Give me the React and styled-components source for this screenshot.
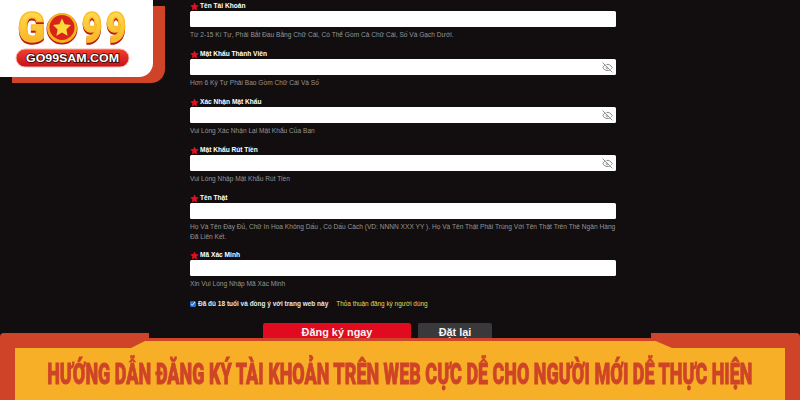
import React from "react"
import styled, { createGlobalStyle } from "styled-components"
import { EyeOff } from "lucide-react"

const GlobalStyle = createGlobalStyle`
  html, body {
    margin: 0;
    padding: 0;
    background: #120e0f;
  }
  * {
    box-sizing: border-box;
  }
`

const Page = styled.div`
  display: flex;
  flex-direction: column;
  width: 800px;
  height: 400px;
  overflow: hidden;
  background: #120e0f;
  font-family: "Liberation Sans", Arial, sans-serif;
`

const Main = styled.div`
  display: flex;
  align-items: flex-start;
  height: 338px;
  overflow: hidden;
`

const LogoPanel = styled.div`
  flex: none;
  width: 153px;
  height: 77px;
  margin-right: 37px;
  background: #fff;
  border-bottom-right-radius: 14px;
  box-shadow: 12px 6px 0 #cf4428;
`

const Form = styled.form`
  display: flex;
  flex-direction: column;
  width: 426px;
  padding-top: 1px;
`

const Field = styled.div`
  display: flex;
  flex-direction: column;
  height: ${props => props.$height || 48}px;
`

const Label = styled.label`
  display: flex;
  align-items: center;
  gap: 1px;
  height: 10px;
  color: #fff;
  font-size: 6.6px;
  font-weight: bold;
  line-height: 10px;
`

const InputWrap = styled.div`
  display: flex;
  align-items: center;
  justify-content: flex-end;
  height: 16px;
  padding-right: 3px;
  background: #fff;
  border-radius: 1.5px;
  color: #858585;
`

const Hint = styled.p`
  margin: 3px 0 0;
  color: #979592;
  font-size: 6.6px;
  line-height: 9.5px;
`

const AgreeRow = styled.div`
  display: flex;
  align-items: center;
  height: 10px;
  margin-top: 1px;
  color: #e6e6e6;
  font-size: 6.5px;
  font-weight: bold;
  line-height: 10px;
`

const Check = styled.input`
  width: 6px;
  height: 6px;
  margin: 0 2px 0 0;
  accent-color: #1b6fd8;
`

const AgreeLink = styled.a`
  margin-left: 8px;
  color: #ecd650;
  font-size: 6.4px;
  font-weight: normal;
`

const Buttons = styled.div`
  display: flex;
  gap: 7px;
  margin: 14px 0 0 73px;
`

const Button = styled.button`
  width: ${props => (props.$primary ? 148 : 74)}px;
  height: 24px;
  padding: 0 0 6px;
  border: 0;
  border-radius: 2px 2px 0 0;
  background: ${props => (props.$primary ? "#e10a1f" : "#39393b")};
  color: #f4f4f4;
  font-family: inherit;
  font-size: 10.9px;
  font-weight: bold;
`

const Banner = styled.div`
  position: relative;
  display: flex;
  align-items: center;
  justify-content: center;
  height: 62px;
  padding-top: 6px;
  background: #f6af27;
  border-top: 3px solid #cf4428;
`

const Corner = styled.div`
  position: absolute;
  top: -8px;
  ${props => props.$side}: 0;
  width: 149px;
  height: 70px;
  background: #cf4428;
  border-top-${props => props.$side}-radius: 4px;
  clip-path: ${props =>
    props.$side === "left"
      ? "polygon(0 0, 100% 0, 100% 6px, 131px 15px, 15px 15px, 15px 100%, 0 100%)"
      : "polygon(0 0, 100% 0, 100% 100%, 134px 100%, 134px 15px, 21px 15px, 0 6px)"};
`

const Title = styled.h1`
  flex: none;
  margin: 0;
  color: #cf4428;
  font-family: "Liberation Sans Narrow", Roboto, sans-serif;
  font-size: 29px;
  font-weight: 900;
  line-height: 30px;
  white-space: nowrap;
  transform: scaleX(0.62);
  -webkit-text-stroke: 0.8px #cf4428;
`

const Glyph = styled.text`
  font-family: Roboto, "Liberation Sans", sans-serif;
  font-size: 42px;
  font-weight: 900;
  fill: url(#gold);
  stroke: #fbbd2a;
  stroke-width: 1.6px;
  filter: drop-shadow(0 2px 0 #b51c14);
`

const PillText = styled.text`
  font-family: "Liberation Sans", sans-serif;
  font-size: 11.5px;
  font-weight: bold;
  fill: #fff;
  stroke: #2a0706;
  stroke-width: 1.6px;
  paint-order: stroke;
`

const RedStar = () => (
  <svg width="9" height="9" viewBox="0 0 24 24" fill="#e0101f">
    <path d="M12 1l3.4 7.3 7.9 1-5.8 5.4 1.5 7.9L12 18.8l-7 3.8 1.5-7.9L.7 9.3l7.9-1z" />
  </svg>
)

const Logo = () => (
  <svg width="153" height="77" viewBox="0 0 153 77">
    <defs>
      <linearGradient id="gold" x1="0" y1="0" x2="0" y2="1">
        <stop offset="0" stopColor="#ffe75a" />
        <stop offset="1" stopColor="#f9a81c" />
      </linearGradient>
      <linearGradient id="pill" x1="0" y1="0" x2="0" y2="1">
        <stop offset="0" stopColor="#f4412f" />
        <stop offset="1" stopColor="#c5101a" />
      </linearGradient>
    </defs>
    <Glyph x="18" y="42" textLength="27" lengthAdjust="spacingAndGlyphs">G</Glyph>
    <Glyph x="82" y="42" textLength="20" lengthAdjust="spacingAndGlyphs">9</Glyph>
    <Glyph x="106" y="42" textLength="20" lengthAdjust="spacingAndGlyphs">9</Glyph>
    <circle cx="62" cy="29" r="15.5" fill="#b51c14" />
    <circle cx="62" cy="28" r="15" fill="#f9b21f" />
    <circle cx="62" cy="27.5" r="12.5" fill="#d8231a" />
    <path
      d="M62 18.5l2.7 5.8 6.3.8-4.6 4.3 1.2 6.3L62 32.5l-5.6 3.2 1.2-6.3-4.6-4.3 6.3-.8z"
      fill="#ffd93b"
    />
    <rect x="16" y="49" width="113" height="18" rx="9" fill="url(#pill)" stroke="#f8b7a8" strokeWidth="1" />
    <PillText x="26" y="62" textLength="93" lengthAdjust="spacingAndGlyphs">
      GO99SAM.COM
    </PillText>
  </svg>
)

const fields = [
  { label: "Tên Tài Khoản", hint: "Từ 2-15 Kí Tự, Phải Bắt Đầu Bằng Chữ Cái, Có Thể Gồm Cả Chữ Cái, Số Và Gạch Dưới." },
  { label: "Mật Khẩu Thành Viên", hint: "Hơn 6 Ký Tự Phải Bao Gồm Chữ Cái Và Số", eye: true },
  { label: "Xác Nhận Mật Khẩu", hint: "Vui Lòng Xác Nhận Lại Mật Khẩu Của Bạn", eye: true },
  { label: "Mật Khẩu Rút Tiền", hint: "Vui Lòng Nhập Mật Khẩu Rút Tiền", eye: true },
  {
    label: "Tên Thật",
    hint: "Họ Và Tên Đầy Đủ, Chữ In Hoa Không Dấu , Có Dấu Cách (VD: NNNN XXX YY ). Họ Và Tên Thật Phải Trùng Với Tên Thật Trên Thẻ Ngân Hàng Đã Liên Kết.",
    height: 57,
  },
  { label: "Mã Xác Minh", hint: "Xin Vui Lòng Nhập Mã Xác Minh" },
]

const App = () => (
  <Page>
    <GlobalStyle />
    <Main>
      <LogoPanel>
        <Logo />
      </LogoPanel>
      <Form>
        {fields.map(field => (
          <Field key={field.label} $height={field.height}>
            <Label>
              <RedStar />
              {field.label}
            </Label>
            <InputWrap>{field.eye && <EyeOff size={11} strokeWidth={2} />}</InputWrap>
            <Hint>{field.hint}</Hint>
          </Field>
        ))}
        <AgreeRow>
          <Check type="checkbox" defaultChecked />
          Đã đủ 18 tuổi và đồng ý với trang web này
          <AgreeLink>Thỏa thuận đăng ký người dùng</AgreeLink>
        </AgreeRow>
        <Buttons>
          <Button type="button" $primary>
            Đăng ký ngay
          </Button>
          <Button type="button">Đặt lại</Button>
        </Buttons>
      </Form>
    </Main>
    <Banner>
      <Corner $side="left" />
      <Corner $side="right" />
      <Title>HƯỚNG DẪN ĐĂNG KÝ TÀI KHOẢN TRÊN WEB CỰC DỄ CHO NGƯỜI MỚI DỄ THỰC HIỆN</Title>
    </Banner>
  </Page>
)

export default App
